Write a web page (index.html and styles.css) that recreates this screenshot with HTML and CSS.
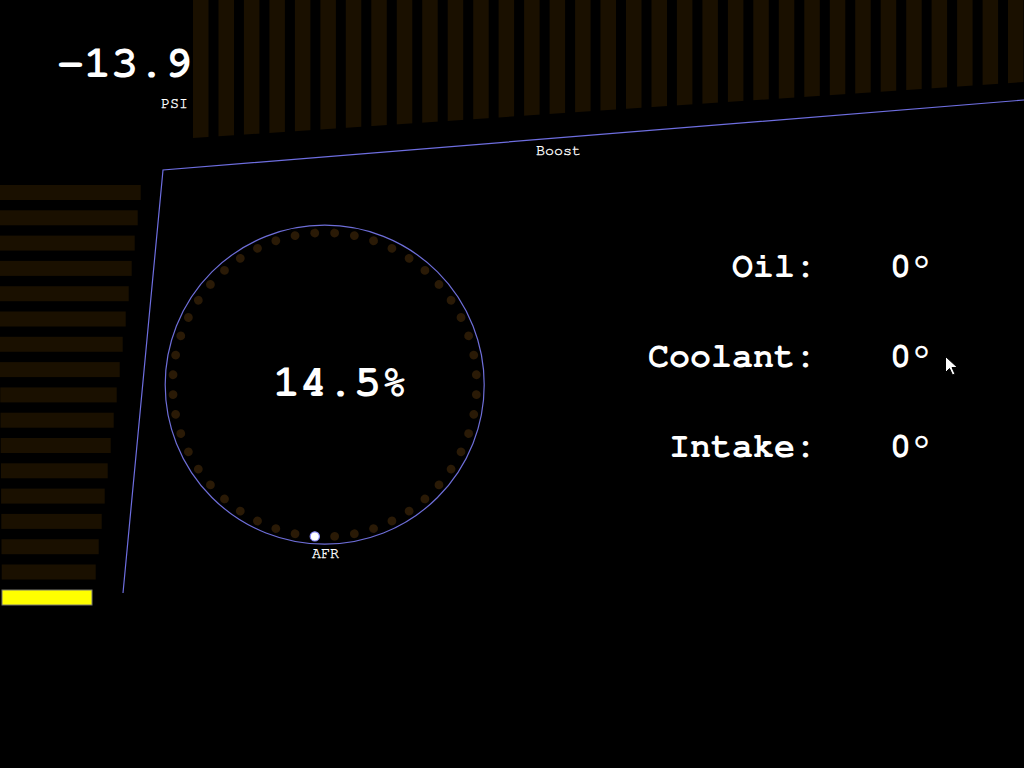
FILE: index.html
```html
<!DOCTYPE html>
<html>
<head>
<meta charset="utf-8">
<link rel="stylesheet" href="styles.css">
</head>
<body>
<main class="dash">
  <svg class="canvas" viewBox="0 0 1024 768" width="1024" height="768" xmlns="http://www.w3.org/2000/svg">
    <defs>
      <clipPath id="boostClip">
        <polygon points="0,0 1024,0 1024,82 193,138"/>
      </clipPath>
    </defs>

    <g class="boost-bars" clip-path="url(#boostClip)">
      <rect x="193.0" y="0" width="15.5" height="140"/>
      <rect x="218.5" y="0" width="15.5" height="140"/>
      <rect x="243.9" y="0" width="15.5" height="140"/>
      <rect x="269.4" y="0" width="15.5" height="140"/>
      <rect x="294.9" y="0" width="15.5" height="140"/>
      <rect x="320.4" y="0" width="15.5" height="140"/>
      <rect x="345.8" y="0" width="15.5" height="140"/>
      <rect x="371.3" y="0" width="15.5" height="140"/>
      <rect x="396.8" y="0" width="15.5" height="140"/>
      <rect x="422.2" y="0" width="15.5" height="140"/>
      <rect x="447.7" y="0" width="15.5" height="140"/>
      <rect x="473.2" y="0" width="15.5" height="140"/>
      <rect x="498.6" y="0" width="15.5" height="140"/>
      <rect x="524.1" y="0" width="15.5" height="140"/>
      <rect x="549.6" y="0" width="15.5" height="140"/>
      <rect x="575.1" y="0" width="15.5" height="140"/>
      <rect x="600.5" y="0" width="15.5" height="140"/>
      <rect x="626.0" y="0" width="15.5" height="140"/>
      <rect x="651.5" y="0" width="15.5" height="140"/>
      <rect x="676.9" y="0" width="15.5" height="140"/>
      <rect x="702.4" y="0" width="15.5" height="140"/>
      <rect x="727.9" y="0" width="15.5" height="140"/>
      <rect x="753.3" y="0" width="15.5" height="140"/>
      <rect x="778.8" y="0" width="15.5" height="140"/>
      <rect x="804.3" y="0" width="15.5" height="140"/>
      <rect x="829.8" y="0" width="15.5" height="140"/>
      <rect x="855.2" y="0" width="15.5" height="140"/>
      <rect x="880.7" y="0" width="15.5" height="140"/>
      <rect x="906.2" y="0" width="15.5" height="140"/>
      <rect x="931.6" y="0" width="15.5" height="140"/>
      <rect x="957.1" y="0" width="15.5" height="140"/>
      <rect x="982.6" y="0" width="15.5" height="140"/>
      <rect x="1008.0" y="0" width="15.5" height="140"/>
    </g>

    <g class="side-bars">
      <rect x="0" y="185.0" width="140.7" height="15"/>
      <rect x="0" y="210.3" width="137.7" height="15"/>
      <rect x="0" y="235.6" width="134.7" height="15"/>
      <rect x="0" y="260.9" width="131.7" height="15"/>
      <rect x="0" y="286.2" width="128.7" height="15"/>
      <rect x="0" y="311.5" width="125.7" height="15"/>
      <rect x="0" y="336.8" width="122.7" height="15"/>
      <rect x="0" y="362.1" width="119.7" height="15"/>
      <rect x="0.3" y="387.4" width="116.4" height="15"/>
      <rect x="0.5" y="412.7" width="113.2" height="15"/>
      <rect x="0.7" y="438.0" width="110.0" height="15"/>
      <rect x="0.9" y="463.3" width="106.8" height="15"/>
      <rect x="1.1" y="488.6" width="103.6" height="15"/>
      <rect x="1.3" y="513.9" width="100.4" height="15"/>
      <rect x="1.5" y="539.2" width="97.2" height="15"/>
      <rect x="1.7" y="564.5" width="94.0" height="15"/>
    </g>
    <rect class="side-active" x="2" y="590" width="90" height="15"/>

    <polyline class="frame" points="1024,100 163,170 123,593"/>

    <circle class="afr-ring" cx="324.7" cy="384.7" r="159.5"/>
    <g class="afr-dots" transform="translate(324.7 384.7)">
      <circle cx="0" cy="-152" r="4.4" transform="rotate(3.75)"/>
      <circle cx="0" cy="-152" r="4.4" transform="rotate(11.25)"/>
      <circle cx="0" cy="-152" r="4.4" transform="rotate(18.75)"/>
      <circle cx="0" cy="-152" r="4.4" transform="rotate(26.25)"/>
      <circle cx="0" cy="-152" r="4.4" transform="rotate(33.75)"/>
      <circle cx="0" cy="-152" r="4.4" transform="rotate(41.25)"/>
      <circle cx="0" cy="-152" r="4.4" transform="rotate(48.75)"/>
      <circle cx="0" cy="-152" r="4.4" transform="rotate(56.25)"/>
      <circle cx="0" cy="-152" r="4.4" transform="rotate(63.75)"/>
      <circle cx="0" cy="-152" r="4.4" transform="rotate(71.25)"/>
      <circle cx="0" cy="-152" r="4.4" transform="rotate(78.75)"/>
      <circle cx="0" cy="-152" r="4.4" transform="rotate(86.25)"/>
      <circle cx="0" cy="-152" r="4.4" transform="rotate(93.75)"/>
      <circle cx="0" cy="-152" r="4.4" transform="rotate(101.25)"/>
      <circle cx="0" cy="-152" r="4.4" transform="rotate(108.75)"/>
      <circle cx="0" cy="-152" r="4.4" transform="rotate(116.25)"/>
      <circle cx="0" cy="-152" r="4.4" transform="rotate(123.75)"/>
      <circle cx="0" cy="-152" r="4.4" transform="rotate(131.25)"/>
      <circle cx="0" cy="-152" r="4.4" transform="rotate(138.75)"/>
      <circle cx="0" cy="-152" r="4.4" transform="rotate(146.25)"/>
      <circle cx="0" cy="-152" r="4.4" transform="rotate(153.75)"/>
      <circle cx="0" cy="-152" r="4.4" transform="rotate(161.25)"/>
      <circle cx="0" cy="-152" r="4.4" transform="rotate(168.75)"/>
      <circle cx="0" cy="-152" r="4.4" transform="rotate(176.25)"/>
      <circle cx="0" cy="-152" r="4.4" transform="rotate(191.25)"/>
      <circle cx="0" cy="-152" r="4.4" transform="rotate(198.75)"/>
      <circle cx="0" cy="-152" r="4.4" transform="rotate(206.25)"/>
      <circle cx="0" cy="-152" r="4.4" transform="rotate(213.75)"/>
      <circle cx="0" cy="-152" r="4.4" transform="rotate(221.25)"/>
      <circle cx="0" cy="-152" r="4.4" transform="rotate(228.75)"/>
      <circle cx="0" cy="-152" r="4.4" transform="rotate(236.25)"/>
      <circle cx="0" cy="-152" r="4.4" transform="rotate(243.75)"/>
      <circle cx="0" cy="-152" r="4.4" transform="rotate(251.25)"/>
      <circle cx="0" cy="-152" r="4.4" transform="rotate(258.75)"/>
      <circle cx="0" cy="-152" r="4.4" transform="rotate(266.25)"/>
      <circle cx="0" cy="-152" r="4.4" transform="rotate(273.75)"/>
      <circle cx="0" cy="-152" r="4.4" transform="rotate(281.25)"/>
      <circle cx="0" cy="-152" r="4.4" transform="rotate(288.75)"/>
      <circle cx="0" cy="-152" r="4.4" transform="rotate(296.25)"/>
      <circle cx="0" cy="-152" r="4.4" transform="rotate(303.75)"/>
      <circle cx="0" cy="-152" r="4.4" transform="rotate(311.25)"/>
      <circle cx="0" cy="-152" r="4.4" transform="rotate(318.75)"/>
      <circle cx="0" cy="-152" r="4.4" transform="rotate(326.25)"/>
      <circle cx="0" cy="-152" r="4.4" transform="rotate(333.75)"/>
      <circle cx="0" cy="-152" r="4.4" transform="rotate(341.25)"/>
      <circle cx="0" cy="-152" r="4.4" transform="rotate(348.75)"/>
      <circle cx="0" cy="-152" r="4.4" transform="rotate(356.25)"/>
    </g>
    <circle class="afr-marker" cx="314.8" cy="536.4" r="4.6"/>

    <text class="big-value" x="57" y="77">-13.9</text>
    <text class="unit" x="161" y="108">PSI</text>
    <text class="unit" x="536" y="155">Boost</text>
    <text class="big-value" x="273" y="396">14.5%</text>
    <text class="unit" x="312" y="558">AFR</text>

    <path class="cursor" d="M945.5 356.5 L945.5 372.5 L949.5 368.5 L952.5 375 L955 374 L952 367.5 L957.5 367.5 Z"/>
  </svg>

  <section class="readings">
    <span class="label">Oil:</span><span class="value">0°</span>
    <span class="label">Coolant:</span><span class="value">0°</span>
    <span class="label">Intake:</span><span class="value">0°</span>
  </section>
</main>
</body>
</html>
```

FILE: styles.css
```css
html, body {
  margin: 0;
  padding: 0;
  background: #000;
}

.dash {
  display: grid;
  width: 1024px;
  height: 768px;
  overflow: hidden;
  background: #000;
}

.dash > * {
  grid-area: 1 / 1;
}

.canvas {
  display: block;
}

.boost-bars rect,
.side-bars rect {
  fill: #1a1000;
}

.side-active {
  fill: #ffff00;
  stroke: #7a7a70;
  stroke-width: 1;
}

.frame {
  fill: none;
  stroke: #6e6ee0;
  stroke-width: 1.2;
}

.afr-ring {
  fill: none;
  stroke: #6e6ed8;
  stroke-width: 1.2;
}

.afr-dots circle {
  fill: #2a1a06;
}

.afr-marker {
  fill: #ffffff;
  stroke: #8c8cff;
  stroke-width: 1.2;
}

.big-value {
  font-family: "Nimbus Mono PS", "Nimbus Mono L", "FreeMono", "Courier", "Liberation Mono", monospace;
  font-weight: bold;
  font-size: 45px;
  fill: #ffffff;
}

.unit {
  font-family: "Nimbus Mono PS", "Nimbus Mono L", "FreeMono", "Courier", "Liberation Mono", monospace;
  font-size: 15px;
  fill: #ffffff;
  stroke: #ffffff;
  stroke-width: 0.35;
}

.cursor {
  fill: #ffffff;
  stroke: #000000;
  stroke-width: 1;
}

.readings {
  align-self: start;
  justify-self: start;
  margin: 222px 0 0 640px;
  display: grid;
  grid-template-columns: 176px auto;
  column-gap: 74px;
  font-family: "Nimbus Mono PS", "Nimbus Mono L", "FreeMono", "Courier", "Liberation Mono", monospace;
  font-weight: bold;
  font-size: 35px;
  line-height: 90px;
  color: #ffffff;
}

.label {
  text-align: right;
}

.value {
  text-align: left;
}
```
